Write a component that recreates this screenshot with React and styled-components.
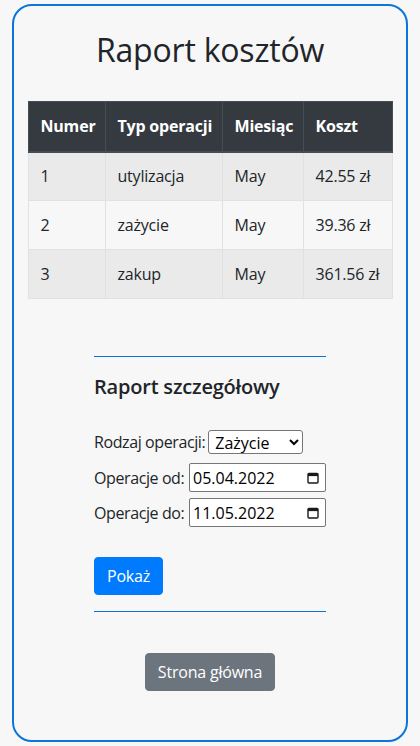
import React from "react";
import styled, { createGlobalStyle } from "styled-components";

const Global = createGlobalStyle`
  html, body { margin: 0; padding: 0; background: #f7f7f7; }
  body {
    font-family: "Segoe UI", "Open Sans", "Noto Sans", sans-serif;
    color: #212529;
    font-size: 16px;
  }
  * { box-sizing: border-box; }
`;

const Card = styled.div`
  margin: 4px 12px 0;
  height: 738px;
  border: 2px solid #0b75d9;
  border-radius: 20px;
  padding: 25px 14px 0;
  display: flex;
  flex-direction: column;
  align-items: center;
`;

const Title = styled.h2`
  margin: 0 0 32px;
  font-size: 32px;
  line-height: 38px;
  font-weight: 500;
  letter-spacing: -0.2px;
  text-align: center;
`;

const Table = styled.table`
  width: 364px;
  border-collapse: collapse;
  table-layout: fixed;
  margin-bottom: 57px;
`;

const Th = styled.th`
  background: #343a40;
  color: #fff;
  font-weight: 700;
  text-align: left;
  height: 50px;
  padding: 0 12px;
  border: 1px solid #454d55;
  border-bottom-width: 2px;
  line-height: 24px;
  white-space: nowrap;
  letter-spacing: -0.2px;
`;

const Tr = styled.tr`
  background: ${(p) => (p.$odd ? "#eaeaea" : "#f7f7f7")};
`;

const Td = styled.td`
  height: 49px;
  padding: 0 12px;
  border: 1px solid #dee2e6;
  line-height: 24px;
  white-space: nowrap;
  letter-spacing: -0.2px;
`;

const Section = styled.div`
  width: 232px;
  display: flex;
  flex-direction: column;
`;

const Rule = styled.hr`
  margin: 0;
  border: 0;
  height: 1px;
  background: #0b75d9;
  width: 100%;
`;

const SubTitle = styled.h4`
  margin: 18px 0 0;
  font-size: 20px;
  line-height: 24px;
  font-weight: 600;
  letter-spacing: -0.2px;
`;

const Form = styled.div`
  margin-top: 31px;
  display: flex;
  flex-direction: column;
`;

const Row = styled.div`
  display: flex;
  align-items: center;
  gap: 3px;
  height: ${(p) => p.$h}px;
  margin-bottom: ${(p) => p.$mb || 0}px;
  line-height: 24px;
`;

const Label = styled.span`
  white-space: nowrap;
  letter-spacing: -0.4px;
`;

const Select = styled.select`
  width: 95px;
  height: 24px;
  font: inherit;
  font-size: 16px;
  color: #000;
  background: #fff;
  border: 1px solid #767676;
  border-radius: 3px;
  padding: 0 2px;
`;

const DateBox = styled.div`
  width: 137px;
  height: 29px;
  flex-shrink: 0;
  margin-left: auto;
  background: #fff;
  border: 1px solid #767676;
  border-radius: 2px;
  display: flex;
  align-items: center;
  justify-content: space-between;
  padding: 0 6px 0 3px;
  color: #000;
`;

const DateText = styled.input`
  border: 0;
  outline: 0;
  background: transparent;
  font: inherit;
  font-size: 16px;
  color: #000;
  width: 100px;
  padding: 0;
`;

const Btn = styled.button`
  font: inherit;
  font-size: 16px;
  line-height: 24px;
  padding: 6px 12px;
  border: 1px solid ${(p) => (p.$variant === "primary" ? "#007bff" : "#6c757d")};
  background: ${(p) => (p.$variant === "primary" ? "#007bff" : "#6c757d")};
  color: #fff;
  border-radius: 4px;
  cursor: pointer;
  letter-spacing: -0.2px;
`;

const PrimaryWrap = styled.div`
  margin: 30px 0 16px;
  align-self: flex-start;
  display: flex;
`;

const Footer = styled.div`
  margin-top: 41px;
  display: flex;
`;

const CalendarIcon = () => (
  <svg width="12" height="12" viewBox="0 0 12 12" aria-hidden="true">
    <rect x="1" y="1.5" width="10" height="9.5" rx="1" fill="none" stroke="#1a1a1a" strokeWidth="1.4" />
    <rect x="1" y="1.5" width="10" height="2.6" fill="#1a1a1a" />
  </svg>
);

const rows = [
  ["1", "utylizacja", "May", "42.55 zł"],
  ["2", "zażycie", "May", "39.36 zł"],
  ["3", "zakup", "May", "361.56 zł"],
];

export default function App() {
  return (
    <>
      <Global />
      <Card>
        <Title>Raport kosztów</Title>
        <Table>
          <colgroup>
            <col style={{ width: 77 }} />
            <col style={{ width: 117 }} />
            <col style={{ width: 81 }} />
            <col style={{ width: 89 }} />
          </colgroup>
          <thead>
            <tr>
              <Th>Numer</Th>
              <Th>Typ operacji</Th>
              <Th>Miesiąc</Th>
              <Th>Koszt</Th>
            </tr>
          </thead>
          <tbody>
            {rows.map((r, i) => (
              <Tr key={r[0]} $odd={i % 2 === 0}>
                {r.map((c, j) => (
                  <Td key={j}>{c}</Td>
                ))}
              </Tr>
            ))}
          </tbody>
        </Table>
        <Section>
          <Rule />
          <SubTitle>Raport szczegółowy</SubTitle>
          <Form>
            <Row $h={24} $mb={9}>
              <Label>Rodzaj operacji:</Label>
              <Select defaultValue="zazycie">
                <option value="zazycie">Zażycie</option>
                <option value="zakup">Zakup</option>
                <option value="utylizacja">Utylizacja</option>
              </Select>
            </Row>
            <Row $h={29} $mb={6}>
              <Label>Operacje od:</Label>
              <DateBox>
                <DateText readOnly defaultValue="05.04.2022" />
                <CalendarIcon />
              </DateBox>
            </Row>
            <Row $h={29}>
              <Label>Operacje do:</Label>
              <DateBox>
                <DateText readOnly defaultValue="11.05.2022" />
                <CalendarIcon />
              </DateBox>
            </Row>
          </Form>
          <PrimaryWrap>
            <Btn $variant="primary">Pokaż</Btn>
          </PrimaryWrap>
          <Rule />
        </Section>
        <Footer>
          <Btn $variant="secondary">Strona główna</Btn>
        </Footer>
      </Card>
    </>
  );
}
